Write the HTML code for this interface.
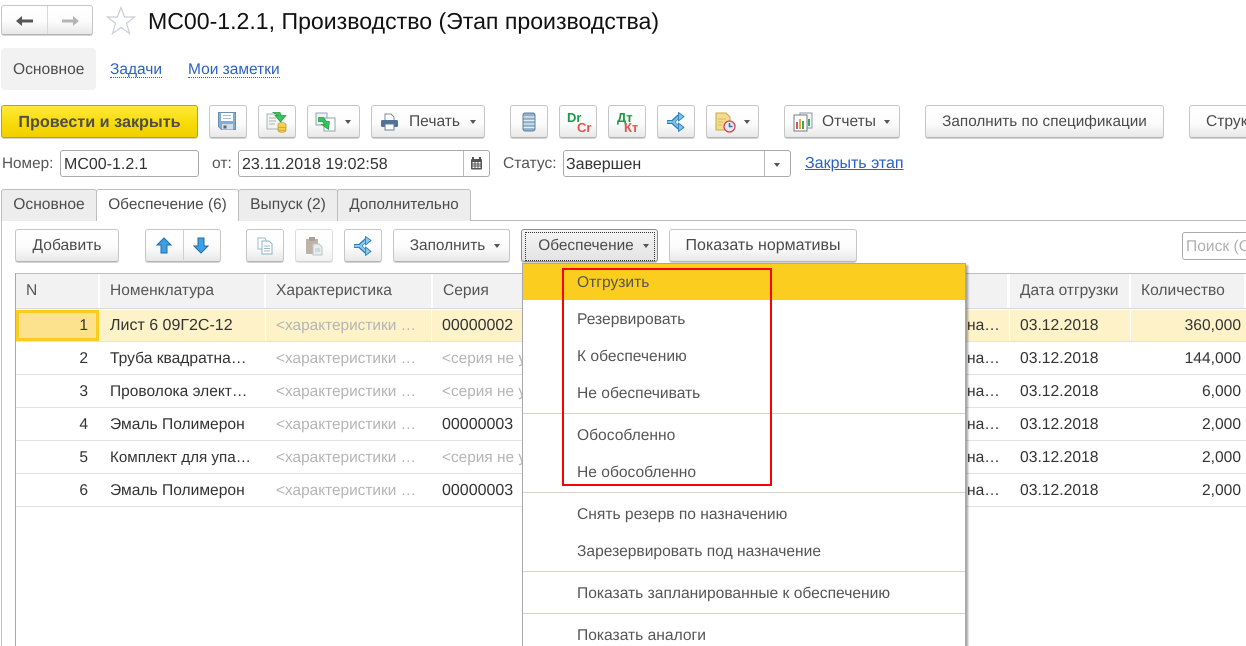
<!DOCTYPE html>
<html lang="ru"><head><meta charset="utf-8"><title>МС00-1.2.1</title>
<style>
html,body{margin:0;padding:0;background:#fff}
#p{position:relative;width:1246px;height:646px;overflow:hidden;font-family:"Liberation Sans",sans-serif;font-size:15.600px;color:#4b4b4b;background:#fff;text-rendering:geometricPrecision}
#p div,#p svg{position:absolute}
.b{box-sizing:border-box;height:33px;top:105px;border:1px solid #c6c6c6;border-bottom:1px solid #b4b4b4;box-shadow:0 1px 0 #d4d4d4;border-radius:3px;background:linear-gradient(#fff 0,#fcfcfc 55%,#e8e8e8 100%);text-align:center;line-height:32px;white-space:nowrap}
.t{white-space:nowrap;line-height:18px;height:18px}
.i{box-sizing:border-box;height:27px;top:150px;border:1px solid #aaa;border-radius:3px;background:#fff;line-height:27px;padding-left:3px;color:#333;white-space:nowrap;font-size:16px}
.tab{box-sizing:border-box;top:189px;height:32px;border:1px solid #bdbdbd;border-bottom:0;background:#ededed;line-height:30px;text-align:center;border-radius:3px 3px 0 0;white-space:nowrap}
.r2{top:229px}
.h{box-sizing:border-box;top:274px;height:34px;background:#f2f2f2;border-right:2px solid #fff;line-height:33px;padding-left:10px;color:#555;white-space:nowrap}
.l{left:16px;width:1230px;height:1px;background:#e2e2e2}
.c{white-space:nowrap;line-height:18px;height:18px;color:#333}
.g{color:#b5b5b5;font-size:15.400px}
.d{font-size:16px}
.n{text-align:right}
.m{left:577px;white-space:nowrap;line-height:18px;height:18px;color:#555}
.s{left:523px;width:442px;height:1px;background:#d8d4c6}
.ar{width:0;height:0;border-left:3.500px solid transparent;border-right:3.500px solid transparent;border-top:4px solid #555}
</style></head><body><div id="p">

<!-- nav -->
<div class="b" style="left:1px;top:5px;width:92px;height:30px"></div>
<div style="left:47px;top:6px;width:1px;height:28px;background:#d8d8d8"></div>
<svg style="left:15px;top:14px" width="20" height="14" viewBox="0 0 20 14"><path d="M1 7 7 2v3.500h11v3H7V12z" fill="#555"/></svg>
<svg style="left:60px;top:14px" width="20" height="14" viewBox="0 0 20 14"><path d="M19 7 13 2v3.500H2v3h11V12z" fill="#b4b4b4"/></svg>
<svg style="left:106px;top:6px" width="30" height="29" viewBox="0 0 30 29"><path d="M15 1.500 18.600 11H28.500L20.500 17.300 23.500 27.500 15 21.500 6.500 27.500 9.500 17.300 1.500 11H11.400Z" fill="#fff" stroke="#c9ced6" stroke-width="1.200"/></svg>
<div class="t" style="left:148px;top:8px;height:26px;line-height:26px;font-size:23.100px;color:#111">МС00-1.2.1, Производство (Этап производства)</div>

<!-- section tabs -->
<div style="left:1px;top:48px;width:95px;height:42px;background:#f2f2f2;border-radius:4px"></div>
<div class="t" style="left:13px;top:60px;line-height:20px">Основное</div>
<div class="t" style="left:110px;top:60px;line-height:20px;color:#2a62c4;border-bottom:1px dotted #2a62c4;height:17px;font-size:15.500px">Задачи</div>
<div class="t" style="left:188px;top:60px;line-height:20px;color:#2a62c4;border-bottom:1px dotted #2a62c4;height:17px;font-size:15.500px">Мои заметки</div>

<!-- command bar -->
<div class="b" style="left:1px;width:197px;border:1px solid #c2a400;background:linear-gradient(#ffea3a,#f8da06 60%,#f0cf00);font-weight:bold;font-size:16.200px;line-height:32px;color:#4f4f45">Провести и закрыть</div>
<div class="b" style="left:209px;width:38px"></div>
<svg style="left:218px;top:112px" width="19" height="19" viewBox="0 0 19 19"><path d="M.5.500h17v17H3.500l-3-3z" fill="#86acd2" stroke="#6a90b4"/><rect x="3" y="1" width="12" height="8" fill="#fff"/><path d="M5 3.500h8M5 6.500h8" stroke="#a9bfd3"/><rect x="4" y="12" width="11" height="5.500" fill="#d5dde4"/><rect x="5.500" y="13.500" width="3" height="3" fill="#56697a"/></svg>
<div class="b" style="left:258px;width:38px"></div>
<svg style="left:266px;top:111px" width="22" height="22" viewBox="0 0 22 22"><rect x="1" y="3" width="14" height="15" fill="#f4f4f0" stroke="#a9b2b9"/><path d="M3 7h7M3 10h7M3 13h6" stroke="#a8b4bc"/><path d="M7 1.500h7l1 3h5l-5.500 6.500L9 4.500h3z" fill="#35c45e" stroke="#1f9c47" stroke-width=".7"/><ellipse cx="16" cy="13.500" rx="4" ry="1.800" fill="#f5d95c" stroke="#b8952a" stroke-width=".7"/><path d="M12 13.500v6c0 1 1.800 1.800 4 1.800s4-.8 4-1.800v-6" fill="#f2cf46" stroke="#b8952a" stroke-width=".7"/><path d="M12 16c.5 1 7.500 1 8 0M12 18.500c.5 1 7.500 1 8 0" stroke="#b8952a" stroke-width=".6" fill="none"/></svg>
<div class="b" style="left:307px;width:53px"></div>
<svg style="left:315px;top:112px" width="22" height="20" viewBox="0 0 22 20"><rect x="1" y="1" width="11" height="12" fill="#eef2f4" stroke="#8ea4b2"/><rect x="9" y="6" width="11" height="13" fill="#fff" stroke="#8ea4b2"/><path d="M3.500 5.500h5l3 4h3l-1 8-7-5h3l-2-3h-4z" fill="#35c45e" stroke="#1f9c47" stroke-width=".7"/></svg>
<div class="ar" style="left:345px;top:120px"></div>
<div class="b" style="left:371px;width:114px;padding-left:13px">Печать</div>
<svg style="left:380px;top:113px" width="19" height="18" viewBox="0 0 19 18"><path d="M5 1h6l3 3v4H5z" fill="#fff" stroke="#7a8c9c"/><rect x="1" y="7" width="17" height="7" rx="1.500" fill="#4f7496"/><rect x="5" y="11" width="9" height="6" fill="#fff" stroke="#6b7e8e"/></svg>
<div class="ar" style="left:470px;top:120px"></div>
<div class="b" style="left:510px;width:38px"></div>
<svg style="left:522px;top:112px" width="14" height="20" viewBox="0 0 14 20"><rect x="1" y="1" width="12" height="18" rx="2" fill="#8fb0c9" stroke="#5f7f98"/><path d="M1.500 5h11M1.500 8.500h11M1.500 12h11M1.500 15.500h11" stroke="#e3edf3" stroke-width="1.300"/></svg>
<div class="b" style="left:559px;width:38px"></div>
<div class="t" style="left:567px;top:111px;font-size:13px;font-weight:bold;color:#1c9a4c;line-height:14px;height:14px">Dr</div>
<div class="t" style="left:577px;top:121px;font-size:13px;font-weight:bold;color:#e5524f;line-height:14px;height:14px">Cr</div>
<div class="b" style="left:608px;width:38px"></div>
<div class="t" style="left:617px;top:111px;font-size:13px;font-weight:bold;color:#1c9a4c;line-height:14px;height:14px">Дт</div>
<div class="t" style="left:624px;top:121px;font-size:13px;font-weight:bold;color:#e5524f;line-height:14px;height:14px">Кт</div>
<div class="b" style="left:657px;width:38px"></div>
<svg style="left:666px;top:112px" width="21" height="20" viewBox="0 0 21 20"><path d="M1 10h5.500L13 4M6.500 10 13 16" fill="none" stroke="#2f7fb8" stroke-width="4"/><path d="M1.500 10h5.500L13 4.500M7 10l6 5.500" fill="none" stroke="#7cc4ee" stroke-width="2"/><path d="M12.500.5 18 4.500 12.500 9zM12.500 11 18 15.500 12.500 19.500z" fill="#7cc4ee" stroke="#2f7fb8" stroke-width=".9" stroke-linejoin="round"/></svg>
<div class="b" style="left:706px;width:53px"></div>
<svg style="left:715px;top:112px" width="22" height="21" viewBox="0 0 22 21"><path d="M1 1h10l4 4v13H1z" fill="#f5dc8b" stroke="#c6a650"/><path d="M3 7h8M3 10h5M3 13h4" stroke="#d9bc66"/><circle cx="14.500" cy="14.500" r="5.500" fill="#dfeaf3" stroke="#d04a4a" stroke-width="1.300"/><path d="M14.500 11v3.500h3" stroke="#3a6ea5" stroke-width="1.500" fill="none"/></svg>
<div class="ar" style="left:744px;top:120px"></div>
<div class="b" style="left:784px;width:116px;padding-left:14px">Отчеты</div>
<svg style="left:793px;top:112px" width="21" height="20" viewBox="0 0 21 20"><rect x="7" y="1" width="12" height="15" fill="#f4f4f4" stroke="#8d98a0"/><rect x="1" y="3" width="13" height="16" fill="#fff" stroke="#6f7b84"/><rect x="3" y="10" width="2" height="7" fill="#d9534f"/><rect x="6" y="7" width="2" height="10" fill="#e7a93c"/><rect x="9" y="9" width="2" height="8" fill="#3fa860"/><rect x="15" y="7" width="2" height="7" fill="#3fa860"/></svg>
<div class="ar" style="left:884px;top:120px"></div>
<div class="b" style="left:925px;width:239px;font-size:15.300px">Заполнить по спецификации</div>
<div class="b" style="left:1189px;width:80px;text-align:left;padding-left:16px">Структура</div>

<!-- fields -->
<div class="t" style="left:2px;top:155px;color:#555;font-size:15.300px">Номер:</div>
<div class="i" style="left:60px;width:139px">МС00-1.2.1</div>
<div class="t" style="left:212px;top:155px;color:#555">от:</div>
<div class="i" style="left:238px;width:252px">23.11.2018 19:02:58</div>
<div style="left:463px;top:151px;width:1px;height:25px;background:#bbb"></div>
<svg style="left:470px;top:157px" width="13" height="13" viewBox="0 0 13 13"><rect x="1" y="2" width="11" height="10.500" rx="1" fill="#555"/><rect x="2.500" y="5" width="8" height="6" fill="#fff"/><path d="M3 0v3M10 0v3" stroke="#555" stroke-width="2"/><path d="M2.500 7h8M2.500 9h8M5 5v6M8 5v6" stroke="#555"/></svg>
<div class="t" style="left:503px;top:155px;color:#555">Статус:</div>
<div class="i" style="left:563px;width:228px;padding-left:2px">Завершен</div>
<div style="left:764px;top:151px;width:1px;height:25px;background:#bbb"></div>
<div class="ar" style="left:774px;top:163px"></div>
<div class="t" style="left:805px;top:155px;color:#2a62c4;text-decoration:underline;font-size:16px">Закрыть этап</div>

<!-- tabs -->
<div style="left:1px;top:220px;width:1245px;height:1px;background:#bdbdbd"></div>
<div style="left:1px;top:220px;width:1px;height:426px;background:#bdbdbd"></div>
<div class="tab" style="left:1px;width:96px">Основное</div>
<div class="tab" style="left:96px;width:143px;height:32px;background:#fff;z-index:2;font-size:15.400px">Обеспечение (6)</div>
<div class="tab" style="left:238px;width:100px">Выпуск (2)</div>
<div class="tab" style="left:337px;width:134px;font-size:15.200px">Дополнительно</div>

<!-- table toolbar -->
<div class="b r2" style="left:15px;width:104px">Добавить</div>
<div class="b r2" style="left:145px;width:76px"></div>
<div style="left:183px;top:230px;width:1px;height:30px;background:#cfcfcf"></div>
<svg style="left:156px;top:237px" width="16" height="17" viewBox="0 0 16 17"><path d="M8 1 15 8H11v8H5V8H1z" fill="#3d9fe6" stroke="#1c6da8"/></svg>
<svg style="left:193px;top:237px" width="16" height="17" viewBox="0 0 16 17"><path d="M8 16 15 9H11V1H5v8H1z" fill="#3d9fe6" stroke="#1c6da8"/></svg>
<div class="b r2" style="left:246px;width:38px"></div>
<svg style="left:257px;top:237px" width="16" height="18" viewBox="0 0 16 18"><path d="M1 1h7l1 2v9H1z" fill="#fff" stroke="#9dbacb"/><path d="M5 4h7l3 3v10H5z" fill="#fff" stroke="#8fb0c4"/><path d="M7 9h6M7 11.500h6M7 14h6" stroke="#9dbacb"/></svg>
<div class="b r2" style="left:295px;width:38px;opacity:.6"></div>
<svg style="left:305px;top:236px" width="18" height="20" viewBox="0 0 18 20"><rect x="1" y="3" width="12" height="15" fill="#bfb2a6"/><rect x="4" y="1" width="6" height="4" fill="#a9a09a"/><path d="M8 8h6l3 3v8H8z" fill="#e9ecee" stroke="#bcc6cc"/><path d="M10 13h5M10 15h5" stroke="#bcc6cc"/></svg>
<div class="b r2" style="left:344px;width:38px"></div>
<svg style="left:353px;top:236px" width="21" height="20" viewBox="0 0 21 20"><path d="M1 10h5.500L13 4M6.500 10 13 16" fill="none" stroke="#2f7fb8" stroke-width="4"/><path d="M1.500 10h5.500L13 4.500M7 10l6 5.500" fill="none" stroke="#8accf0" stroke-width="2"/><path d="M12.500.5 18 4.500 12.500 9zM12.500 11 18 15.500 12.500 19.500z" fill="#8accf0" stroke="#2f7fb8" stroke-width=".9" stroke-linejoin="round"/></svg>
<div class="b r2" style="left:393px;width:117px;padding-right:8px;font-size:15.400px">Заполнить</div>
<div class="ar" style="left:494px;top:244px"></div>
<div class="b r2" style="left:521px;width:137px;padding-right:7px;font-size:15.400px;border-color:#8c8c8c;background:linear-gradient(#f4f4f4,#e4e4e4)">Обеспечение</div>
<div style="left:525px;top:232px;width:128px;height:27px;border:1px dotted #333"></div>
<div class="ar" style="left:643px;top:244px"></div>
<div class="b r2" style="left:669px;width:188px;font-size:16px">Показать нормативы</div>
<div class="i" style="left:1182px;top:232px;width:80px;height:28px;color:#b0b0b0;padding-left:3px;font-size:15.600px">Поиск (Ctrl+F)</div>

<!-- table -->
<div style="left:15px;top:273px;width:1231px;height:1px;background:#bdbdbd"></div>
<div style="left:15px;top:273px;width:1px;height:373px;background:#a8a8a8"></div>
<div class="h" style="left:16px;width:84px">N</div>
<div class="h" style="left:100px;width:166px;font-size:15.500px">Номенклатура</div>
<div class="h" style="left:266px;width:167px">Характеристика</div>
<div class="h" style="left:433px;width:576px">Серия</div>
<div class="h" style="left:1010px;width:121px;font-size:15.500px">Дата отгрузки</div>
<div class="h" style="left:1131px;width:115px">Количество</div>
<div style="left:16px;top:308px;width:1230px;height:1px;background:#d8d8d8"></div>

<div style="left:99px;top:310px;width:1147px;height:31px;background:#fdf2c8"></div>
<div style="left:265px;top:310px;width:1px;height:31px;background:#fff"></div>
<div style="left:431px;top:310px;width:1px;height:31px;background:#fff"></div>
<div style="left:1009px;top:310px;width:1px;height:31px;background:#fff"></div>
<div style="left:1130px;top:310px;width:1px;height:31px;background:#fff"></div>
<div style="box-sizing:border-box;left:16px;top:310px;width:83px;height:31px;background:#fde28e;border:3px solid #fbcb20"></div>
<div class="l" style="top:341px"></div><div class="l" style="top:374px"></div><div class="l" style="top:407px"></div><div class="l" style="top:440px"></div><div class="l" style="top:473px"></div><div class="l" style="top:506px"></div>

<div class="c n" style="left:16px;width:72px;top:317px">1</div>
<div class="c d" style="left:110px;top:317px">Лист 6 09Г2С-12</div>
<div class="c g" style="left:276px;top:317px">&lt;характеристики …</div>
<div class="c d" style="left:442px;top:317px">00000002</div>
<div class="c" style="left:967px;top:317px">на…</div>
<div class="c" style="left:1020px;top:317px;font-size:15.700px">03.12.2018</div>
<div class="c n" style="left:1131px;width:110px;top:317px">360,000</div>

<div class="c n" style="left:16px;width:72px;top:350px">2</div>
<div class="c" style="left:110px;top:350px">Труба квадратна…</div>
<div class="c g" style="left:276px;top:350px">&lt;характеристики …</div>
<div class="c g" style="left:442px;top:350px">&lt;серия не у</div>
<div class="c" style="left:967px;top:350px">на…</div>
<div class="c" style="left:1020px;top:350px;font-size:15.700px">03.12.2018</div>
<div class="c n" style="left:1131px;width:110px;top:350px">144,000</div>

<div class="c n" style="left:16px;width:72px;top:383px">3</div>
<div class="c" style="left:110px;top:383px;font-size:15.500px">Проволока элект…</div>
<div class="c g" style="left:276px;top:383px">&lt;характеристики …</div>
<div class="c g" style="left:442px;top:383px">&lt;серия не у</div>
<div class="c" style="left:967px;top:383px">на…</div>
<div class="c" style="left:1020px;top:383px;font-size:15.700px">03.12.2018</div>
<div class="c n" style="left:1131px;width:110px;top:383px">6,000</div>

<div class="c n" style="left:16px;width:72px;top:416px">4</div>
<div class="c" style="left:110px;top:416px">Эмаль Полимерон</div>
<div class="c g" style="left:276px;top:416px">&lt;характеристики …</div>
<div class="c d" style="left:442px;top:416px">00000003</div>
<div class="c" style="left:967px;top:416px">на…</div>
<div class="c" style="left:1020px;top:416px;font-size:15.700px">03.12.2018</div>
<div class="c n" style="left:1131px;width:110px;top:416px">2,000</div>

<div class="c n" style="left:16px;width:72px;top:449px">5</div>
<div class="c" style="left:110px;top:449px;font-size:15.200px">Комплект для упа…</div>
<div class="c g" style="left:276px;top:449px">&lt;характеристики …</div>
<div class="c g" style="left:442px;top:449px">&lt;серия не у</div>
<div class="c" style="left:967px;top:449px">на…</div>
<div class="c" style="left:1020px;top:449px;font-size:15.700px">03.12.2018</div>
<div class="c n" style="left:1131px;width:110px;top:449px">2,000</div>

<div class="c n" style="left:16px;width:72px;top:482px">6</div>
<div class="c" style="left:110px;top:482px">Эмаль Полимерон</div>
<div class="c g" style="left:276px;top:482px">&lt;характеристики …</div>
<div class="c d" style="left:442px;top:482px">00000003</div>
<div class="c" style="left:967px;top:482px">на…</div>
<div class="c" style="left:1020px;top:482px;font-size:15.700px">03.12.2018</div>
<div class="c n" style="left:1131px;width:110px;top:482px">2,000</div>

<!-- menu -->
<div style="box-sizing:border-box;left:522px;top:263px;width:444px;height:400px;background:#fff;border:1px solid #a8a8a8;box-shadow:2px 2px 2px rgba(0,0,0,.35)"></div>
<div style="left:523px;top:264px;width:442px;height:36px;background:#fbcd1f"></div>
<div class="m" style="top:274px">Отгрузить</div>
<div class="m" style="top:311px">Резервировать</div>
<div class="m" style="top:348px">К обеспечению</div>
<div class="m" style="top:385px">Не обеспечивать</div>
<div class="s" style="top:413px"></div>
<div class="m" style="top:427px">Обособленно</div>
<div class="m" style="top:464px">Не обособленно</div>
<div class="s" style="top:492px"></div>
<div class="m" style="top:506px">Снять резерв по назначению</div>
<div class="m" style="top:543px">Зарезервировать под назначение</div>
<div class="s" style="top:571px"></div>
<div class="m" style="top:585px">Показать запланированные к обеспечению</div>
<div class="s" style="top:613px"></div>
<div class="m" style="top:627px">Показать аналоги</div>

<div style="box-sizing:border-box;left:562px;top:268px;width:210px;height:218px;border:2px solid #f00"></div>
</div></body></html>
